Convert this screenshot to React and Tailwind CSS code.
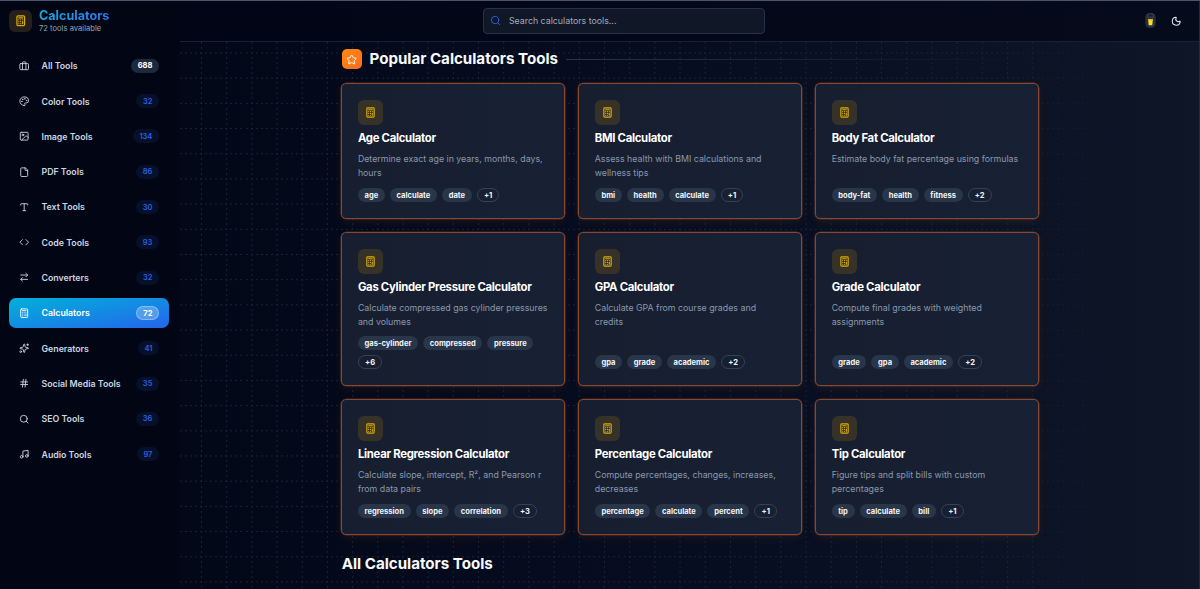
import React from "react";
import {
  Briefcase, Palette, Image, File, Type, Code, ArrowRightLeft, Calculator,
  Sparkles, Hash, Search, Music, Star, Moon,
} from "lucide-react";

const nav = [
  ["All Tools", "688", Briefcase],
  ["Color Tools", "32", Palette],
  ["Image Tools", "134", Image],
  ["PDF Tools", "86", File],
  ["Text Tools", "30", Type],
  ["Code Tools", "93", Code],
  ["Converters", "32", ArrowRightLeft],
  ["Calculators", "72", Calculator],
  ["Generators", "41", Sparkles],
  ["Social Media Tools", "35", Hash],
  ["SEO Tools", "36", Search],
  ["Audio Tools", "97", Music],
];

const tools = [
  ["Age Calculator", "Determine exact age in years, months, days, hours", ["age", "calculate", "date"], "+1"],
  ["BMI Calculator", "Assess health with BMI calculations and wellness tips", ["bmi", "health", "calculate"], "+1"],
  ["Body Fat Calculator", "Estimate body fat percentage using formulas", ["body-fat", "health", "fitness"], "+2"],
  ["Gas Cylinder Pressure Calculator", "Calculate compressed gas cylinder pressures and volumes", ["gas-cylinder", "compressed", "pressure"], "+6"],
  ["GPA Calculator", "Calculate GPA from course grades and credits", ["gpa", "grade", "academic"], "+2"],
  ["Grade Calculator", "Compute final grades with weighted assignments", ["grade", "gpa", "academic"], "+2"],
  ["Linear Regression Calculator", "Calculate slope, intercept, R², and Pearson r from data pairs", ["regression", "slope", "correlation"], "+3"],
  ["Percentage Calculator", "Compute percentages, changes, increases, decreases", ["percentage", "calculate", "percent"], "+1"],
  ["Tip Calculator", "Figure tips and split bills with custom percentages", ["tip", "calculate", "bill"], "+1"],
];

function NavItem({ label, count, Icon }) {
  const active = label === "Calculators";
  const all = label === "All Tools";
  const badge = active
    ? "border-white/30 bg-white/25 font-bold text-white"
    : all
      ? "border-transparent bg-[#1d293d] font-bold text-white"
      : "border-transparent bg-[#06102a] font-semibold text-[#2860e6]";
  return (
    <a
      className={
        "flex h-[30.3px] items-center rounded-[7px] pl-[9.8px] pr-[10px] " +
        (active ? "bg-linear-to-br from-[#06b0d8] to-[#2563eb] text-white" : "text-[#cad5e2]")
      }
    >
      <Icon className="size-[10.4px] shrink-0" strokeWidth={2.1} />
      <span className="ml-[12.3px] flex-1 whitespace-nowrap text-[8.82px] font-semibold tracking-[-0.02px]">{label}</span>
      <span className={"flex h-[14px] items-center rounded-full border px-[5.8px] pt-[0.5px] text-[7.56px] " + badge}>
        {count}
      </span>
    </a>
  );
}

function ToolCard({ title, text, tags, more }) {
  return (
    <article className="flex flex-col rounded-[5px] border border-[#86492f] bg-linear-to-r from-[#161e2f] to-[#182134] px-[15.7px] pb-[15.8px] pt-[15.8px] shadow-[0_0_0_0.3px_#86492f,0_3px_9px_rgba(249,115,22,0.09)]">
      <div className="flex size-[25.2px] shrink-0 items-center justify-center rounded-[6px] bg-[#363228] text-[#d9ac0b]">
        <Calculator className="size-[11px]" strokeWidth={2.5} />
      </div>
      <h3 className="mt-[5px] h-[16px] whitespace-nowrap text-[11.34px] font-bold leading-[16px] tracking-[-0.28px] text-white">{title}</h3>
      <p className="mb-[7px] mt-[5.6px] text-[8.82px] leading-[14.3px] text-[#8b98ad]">{text}</p>
      <div className="mt-auto flex flex-wrap gap-[5px]">
        {tags.map((t) => (
          <span key={t} className="flex h-[14px] items-center rounded-full bg-[#293548] px-[6.7px] pt-[0.5px] text-[7.56px] font-bold text-[#f1f5f9]">{t}</span>
        ))}
        <span className="flex h-[14px] items-center rounded-full border border-[#344156] px-[6.2px] pt-[0.5px] text-[7.56px] font-bold text-[#f1f5f9]">{more}</span>
      </div>
    </article>
  );
}

export default function App() {
  return (
    <div className="relative flex h-[589px] w-[1200px] overflow-hidden border-t border-[#4b5567] bg-[#020617] font-['Inter',sans-serif]">
      <aside className="flex w-[179.5px] shrink-0 flex-col bg-[#020514]">
        <div className="flex h-[40px] items-center gap-[7.3px] pl-[9px]">
          <div className="flex size-[22.7px] items-center justify-center rounded-[6px] bg-[#25201c] text-[#d9ac0b]">
            <Calculator className="size-[11.5px]" strokeWidth={2.5} />
          </div>
          <div className="flex flex-col pt-[1px]">
            <span className="w-fit bg-linear-to-r from-[#18aadd] to-[#2c75ee] bg-clip-text text-[12.6px] font-bold leading-[14px] text-transparent">Calculators</span>
            <span className="mt-[1.8px] text-[7.56px] leading-[10px] tracking-[0.03px] text-[#99a5b6]">72 tools available</span>
          </div>
        </div>
        <nav className="mt-[9.75px] flex flex-col gap-[5px] pl-[9px] pr-[10.3px]">
          {nav.map(([label, count, Icon]) => (
            <NavItem key={label} label={label} count={count} Icon={Icon} />
          ))}
        </nav>
      </aside>

      <div className="flex min-w-0 flex-1 flex-col">
        <header className="flex h-[40.5px] shrink-0 items-center border-b border-[#182136] bg-linear-to-r from-[#020515] to-[#060b1c] pl-[303.3px] pr-[18.2px]">
          <div className="flex h-[25.5px] w-[282px] items-center rounded-[4px] border border-[#263147] bg-[#101727] pl-[6.5px]">
            <Search className="size-[11px] text-[#2b63ea]" strokeWidth={2} />
            <span className="ml-[7.6px] text-[8.82px] text-[#a0abbc]">Search calculators tools...</span>
          </div>
          <div className="ml-auto flex items-center gap-[15px]">
            <svg className="h-[17px] w-[11px]" viewBox="0 0 11 17">
              <rect x="0.3" y="1" width="10.4" height="15" rx="4.5" fill="#252e41" />
              <path d="M2.4 5.2V4.2a3.1 2.6 0 0 1 6.2 0v1z" fill="#172033" stroke="#465064" strokeWidth="0.7" />
              <path d="M3.1 7h4.8l-.6 6.3H3.7z" fill="#fde01a" />
              <path d="M3.2 7h4.6l-.2 1.6H3.4z" fill="#e9b50d" />
            </svg>
            <Moon className="size-[10.5px] text-[#e2e8f0]" strokeWidth={2.4} />
          </div>
        </header>

        <main className="relative min-h-0 flex-1 overflow-hidden bg-linear-to-r from-[#030818] via-[#070d20] via-50% to-[#0e1627]">
          <div className="absolute inset-0 bg-[linear-gradient(to_right,#192337_1px,transparent_1px)] bg-[length:25.2px_25.2px] bg-[position:21px_0] [mask-composite:intersect] [mask-image:repeating-linear-gradient(to_bottom,#000_0_2px,transparent_2px_5.04px),linear-gradient(to_right,#000_80%,transparent_94%)]" />
          <div className="absolute inset-0 bg-[linear-gradient(to_bottom,#192337_1px,transparent_1px)] bg-[length:25.2px_25.2px] bg-[position:0_10.5px] [mask-composite:intersect] [mask-image:repeating-linear-gradient(to_right,#000_0_2px,transparent_2px_5.04px),linear-gradient(to_right,#000_80%,transparent_94%)]" />
          <div className="relative flex flex-col pl-[161.7px]">
            <div className="mt-[7.8px] flex h-[20px] w-[698px] items-center pl-[0.6px]">
              <div className="flex size-[20.2px] items-center justify-center rounded-[5px] bg-linear-to-br from-[#ff8a10] to-[#ff6a20] text-white">
                <Star className="size-[11.3px]" strokeWidth={2} />
              </div>
              <h2 className="ml-[7.5px] whitespace-nowrap text-[15.12px] font-bold text-[#f8fafc]">Popular Calculators Tools</h2>
              <div className="ml-[8px] h-px flex-1 bg-linear-to-r from-[#283449] to-transparent" />
            </div>
            <div className="mt-[14.2px] grid w-[698px] grid-cols-[224.2px_224.2px_224.2px] grid-rows-[135.8px_154px_135.8px] gap-x-[12.7px] gap-y-[13px]">
              {tools.map(([title, text, tags, more]) => (
                <ToolCard key={title} title={title} text={text} tags={tags} more={more} />
              ))}
            </div>
            <h2 className="mt-[18px] pl-[0.5px] text-[15.12px] font-bold leading-[22px] text-[#f8fafc]">All Calculators Tools</h2>
          </div>
        </main>
      </div>
      <div className="absolute inset-y-0 right-0 w-px bg-[#222b3c]" />
    </div>
  );
}
